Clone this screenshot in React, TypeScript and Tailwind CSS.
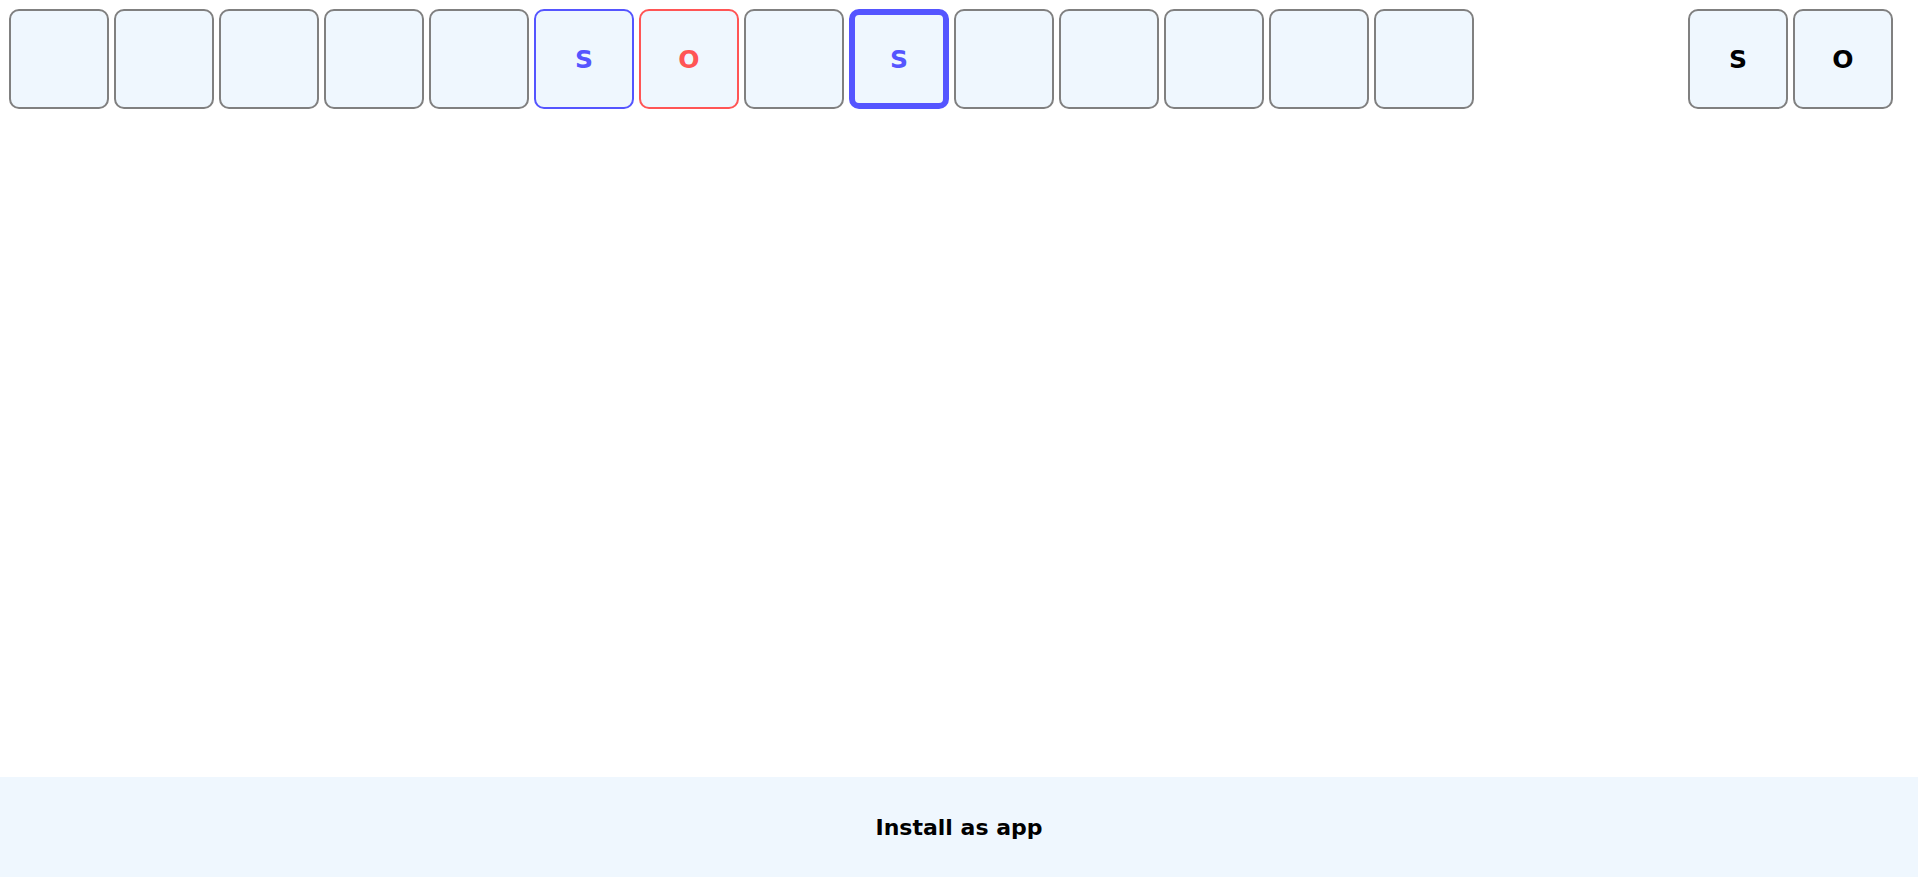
import React from "react";

type Tile = { letter?: string; kind?: "s" | "o" | "active" };

const board: Tile[] = [
  {}, {}, {}, {}, {},
  { letter: "S", kind: "s" },
  { letter: "O", kind: "o" },
  {},
  { letter: "S", kind: "active" },
  {}, {}, {}, {}, {},
];

function Cell({ tile }: { tile: Tile }) {
  let cls = "border-2 border-[#808080] text-black";
  if (tile.kind === "s") cls = "border-2 border-[#5555ff] text-[#5555ff]";
  if (tile.kind === "o") cls = "border-2 border-[#ff5555] text-[#ff5555]";
  if (tile.kind === "active") cls = "border-[6px] border-[#5555ff] text-[#5555ff]";
  return (
    <div
      className={`w-[100px] h-[100px] rounded-[10px] bg-[#eff7fe] flex items-center justify-center pt-[2px] text-[25px] font-bold ${cls}`}
    >
      {tile.letter}
    </div>
  );
}

export default function App() {
  return (
    <div
      className="min-h-screen flex flex-col bg-white"
      style={{ fontFamily: '"DejaVu Sans", Verdana, sans-serif' }}
    >
      <div className="flex justify-between pl-[9px] pr-[25px] pt-[9px]">
        <div className="flex gap-[5px]">
          {board.map((t, i) => (
            <Cell key={i} tile={t} />
          ))}
        </div>
        <div className="flex gap-[5px]">
          <Cell tile={{ letter: "S" }} />
          <Cell tile={{ letter: "O" }} />
        </div>
      </div>

      <div className="mt-auto h-[100px] bg-[#eff7fe] flex items-center justify-center">
        <span className="text-[22px] font-bold text-black">Install as app</span>
      </div>
    </div>
  );
}
